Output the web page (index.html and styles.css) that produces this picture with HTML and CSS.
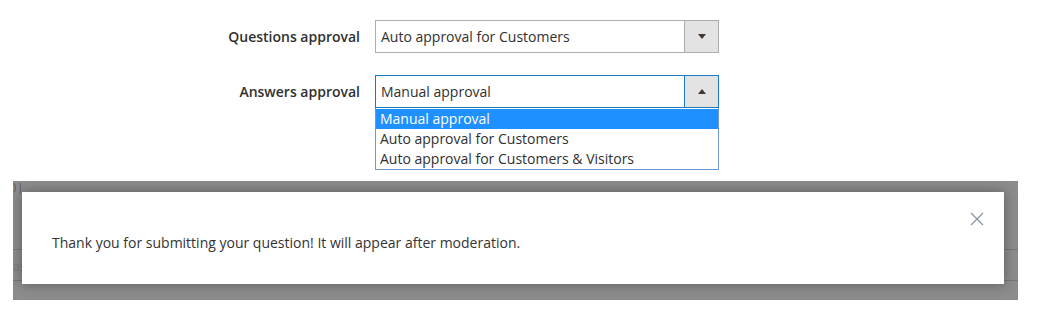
FILE: index.html
```html
<!DOCTYPE html>
<html lang="en">
<head>
    <meta charset="UTF-8">
    <title>Approval settings</title>
    <link rel="stylesheet" href="styles.css">
</head>
<body>
    <div class="form">
        <div class="field">
            <label class="field-label">Questions approval</label>
            <div class="select">
                <span class="select-value">Auto approval for Customers</span>
                <span class="select-btn"><span class="arrow-down"></span></span>
            </div>
        </div>

        <div class="field field-open">
            <label class="field-label">Answers approval</label>
            <div class="select-wrap">
                <div class="select select-focus">
                    <span class="select-value">Manual approval</span>
                    <span class="select-btn"><span class="arrow-up"></span></span>
                </div>
                <ul class="options">
                    <li class="option selected">Manual approval</li>
                    <li class="option">Auto approval for Customers</li>
                    <li class="option">Auto approval for Customers &amp; Visitors</li>
                </ul>
            </div>
        </div>
    </div>

    <div class="overlay">
        <div class="under">
            <span class="under-glyph">)|</span>
            <div class="under-row"><span class="under-text">as</span></div>
        </div>
        <div class="modal">
            <button class="modal-close" aria-label="Close">
                <svg width="14" height="14" viewBox="0 0 14 14">
                    <path d="M1 1 L13 13 M13 1 L1 13" stroke="#8a96a3" stroke-width="1.3" fill="none"/>
                </svg>
            </button>
            <p class="modal-text">Thank you for submitting your question! It will appear after moderation.</p>
        </div>
    </div>
</body>
</html>
```

FILE: styles.css
```css
body {
    margin: 0;
    font-family: 'Open Sans', sans-serif;
    font-size: 14px;
    color: #303030;
    background: #fff;
}
.form {
    padding-top: 20px;
}
.field {
    display: flex;
    align-items: flex-start;
    margin-bottom: 22px;
}
.field-open {
    margin-bottom: 0;
}
.field-label {
    width: 375px;
    text-align: right;
    padding-right: 15px;
    box-sizing: border-box;
    font-weight: 600;
    color: #303030;
    line-height: 33px;
}
.select-wrap {
    width: 344px;
}
.select {
    width: 344px;
    height: 33px;
    box-sizing: border-box;
    border: 1px solid #adadad;
    display: flex;
    align-items: stretch;
}
.select-focus {
    border-color: #1979c3;
}
.select-value {
    flex: 1;
    padding-left: 5px;
    line-height: 31px;
    color: #303030;
}
.select-btn {
    width: 33px;
    border-left: 1px solid #adadad;
    background: #e3e3e3;
    display: flex;
    align-items: center;
    justify-content: center;
}
.select-focus .select-btn {
    border-left-color: #1979c3;
}
.arrow-down {
    width: 0;
    height: 0;
    border-left: 4px solid transparent;
    border-right: 4px solid transparent;
    border-top: 5px solid #41362f;
}
.arrow-up {
    width: 0;
    height: 0;
    border-left: 4px solid transparent;
    border-right: 4px solid transparent;
    border-bottom: 5px solid #41362f;
}
.options {
    list-style: none;
    margin: 0;
    padding: 0;
    border: 1px solid #6b97d6;
    border-top: none;
    width: 344px;
    box-sizing: border-box;
    padding-top: 1px;
}
.option {
    height: 20px;
    line-height: 20px;
    padding-left: 4px;
    color: #303030;
}
.option.selected {
    background: #1e90ff;
    color: #fff;
}
.overlay {
    position: relative;
    margin: 11px 0 0 13px;
    width: 1005px;
    height: 119px;
    box-sizing: border-box;
    padding: 11px 0 0 9px;
    background: #8c8c8c;
    overflow: hidden;
}
.under {
    position: absolute;
    left: 0;
    top: 0;
    width: 100%;
    height: 100%;
}
.under-glyph {
    display: block;
    height: 11px;
    margin-left: 0;
    font-size: 11px;
    line-height: 11px;
    color: #5a5a5a;
    letter-spacing: 1px;
}
.under-row {
    margin-top: 57px;
    height: 32px;
    border-top: 1px solid #777;
    border-bottom: 1px solid #777;
    box-sizing: border-box;
}
.under-text {
    display: block;
    margin-left: 0;
    line-height: 34px;
    font-size: 12px;
    color: #7a7a7a;
}
.modal {
    position: relative;
    width: 982px;
    height: 92px;
    background: #fff;
    box-shadow: 0 0 12px rgba(0, 0, 0, 0.35);
    box-sizing: border-box;
    padding: 41px 30px 0 30px;
}
.modal-close {
    position: absolute;
    top: 20px;
    right: 20px;
    background: none;
    border: none;
    padding: 0;
    width: 14px;
    height: 14px;
    cursor: pointer;
}
.modal-close svg {
    display: block;
}
.modal-text {
    margin: 0;
    line-height: 20px;
    color: #333;
}
```
